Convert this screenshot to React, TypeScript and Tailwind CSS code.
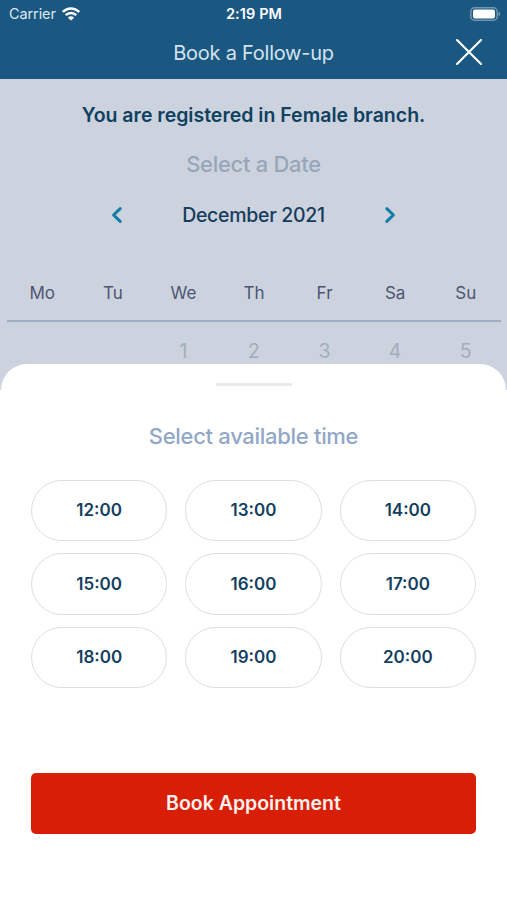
import React, { useState } from 'react';

const WEEK_DAYS = ['Mo', 'Tu', 'We', 'Th', 'Fr', 'Sa', 'Su'];
const FIRST_WEEK = ['', '', '1', '2', '3', '4', '5'];
const TIMES = ['12:00', '13:00', '14:00', '15:00', '16:00', '17:00', '18:00', '19:00', '20:00'];

const WifiIcon = () => (
  <svg width="18" height="14" viewBox="0 0 18 14" fill="none" stroke="#fff" strokeWidth="2.5">
    <path d="M0.8 5C5.4 0.3 12.6 0.3 17.2 5" />
    <path d="M3.7 8.2C6.6 5.2 11.4 5.2 14.3 8.2" />
    <path d="M9 13.6L5.9 10.7C7.7 8.9 10.3 8.9 12.1 10.7Z" fill="#fff" stroke="none" />
  </svg>
);

const BatteryIcon = () => (
  <svg width="31" height="14" viewBox="0 0 31 14" fill="none">
    <rect x="0.8" y="0.8" width="26.4" height="12.4" rx="3.8" stroke="#fff" strokeOpacity="0.38" strokeWidth="1.5" />
    <rect x="3" y="2.6" width="22" height="8.8" rx="1.8" fill="#fff" />
    <path d="M28.6 4.8C30.6 5.4 30.6 8.6 28.6 9.2Z" fill="#fff" fillOpacity="0.45" />
  </svg>
);

const StatusBar = () => (
  <div className="grid h-[27px] grid-cols-3 items-center pl-[9px] pr-[6px] text-white">
    <div className="flex items-center gap-[6px] text-[14.5px] tracking-[-0.1px] text-[#dce8f2]">
      <span>Carrier</span>
      <WifiIcon />
    </div>
    <div className="-ml-[2px] text-center text-[14.5px] font-semibold tracking-[0.1px]">2:19 PM</div>
    <div className="flex justify-end">
      <BatteryIcon />
    </div>
  </div>
);

const Header = () => (
  <header className="h-[79px] bg-[#1a5882]">
    <StatusBar />
    <div className="grid h-[50px] grid-cols-[60px_1fr_60px] items-center">
      <h1 className="col-start-2 pt-px text-center text-[20px] tracking-[-0.25px] text-[#d5e2ed]">Book a Follow-up</h1>
      <button aria-label="Close" className="ml-[8px] w-[28px]">
        <svg width="28" height="28" viewBox="0 0 28 28" stroke="#fff" strokeWidth="2.1" strokeLinecap="round">
          <path d="M2 2L26 26M26 2L2 26" />
        </svg>
      </button>
    </div>
  </header>
);

const Chevron = ({ flip = false }: { flip?: boolean }) => (
  <svg
    width="12"
    height="18"
    viewBox="0 0 12 18"
    fill="none"
    stroke="#0f7da5"
    strokeWidth="3"
    strokeLinecap="round"
    strokeLinejoin="round"
    className={flip ? 'rotate-180' : ''}
  >
    <path d="M9.2 2.6L2.6 9L9.2 15.4" />
  </svg>
);

const Calendar = () => (
  <section className="h-[285px] text-center">
    <p className="pt-[22px] text-[19.5px] leading-[28px] font-semibold text-[#0f4160]">
      You are registered in Female branch.
    </p>
    <h2 className="mt-[20px] text-[22px] leading-[30px] font-medium tracking-[-0.3px] text-[#97a6b8]">
      Select a Date
    </h2>
    <div className="mt-[21px] flex h-[30px] items-center justify-between px-[111px]">
      <button aria-label="Previous month">
        <Chevron />
      </button>
      <span className="pt-px text-[19.5px] font-medium tracking-[-0.3px] text-[#173c5b]">December 2021</span>
      <button aria-label="Next month">
        <Chevron flip />
      </button>
    </div>
    <div className="mr-[6px] ml-[7px] mt-[50px] grid h-[42px] grid-cols-7 border-b-2 border-[#9faec3] text-[17px] leading-[26px] text-[#4d5671]">
      {WEEK_DAYS.map((day) => (
        <span key={day}>{day}</span>
      ))}
    </div>
    <div className="mr-[6px] ml-[7px] mt-[15px] grid grid-cols-7 text-[19.5px] leading-[28px] text-[#a4adba]">
      {FIRST_WEEK.map((date, idx) => (
        <span key={idx}>{date}</span>
      ))}
    </div>
  </section>
);

const TimeSheet = () => {
  const [selected, setSelected] = useState<string | null>(null);

  return (
    <section className="mx-px flex flex-1 flex-col rounded-t-[26px] bg-white px-[30px]">
      {/* Drag handle */}
      <div className="mx-auto mt-[19px] h-[3px] w-[76px] bg-[#ebebeb]" />
      <h2 className="mt-[35px] h-[30px] text-center text-[22px] leading-[30px] font-medium tracking-[-0.3px] text-[#92a7c8]">
        Select available time
      </h2>
      <div className="mt-[29px] grid grid-cols-3 gap-x-[18px] gap-y-3">
        {TIMES.map((time) => (
          <button
            key={time}
            onClick={() => setSelected(time)}
            className={`h-[61.3px] rounded-full border-[1.5px] pt-px text-[17px] font-semibold text-[#153f60] ${
              selected === time ? 'border-[#1a5882]' : 'border-[#dedede]'
            }`}
          >
            {time}
          </button>
        ))}
      </div>
      <button className="mt-[85px] h-[61px] rounded-[5px] bg-[#d81f05] pt-px text-[19.5px] font-semibold text-[#fff1ef]">
        Book Appointment
      </button>
    </section>
  );
};

export default function App() {
  return (
    <main className="flex h-[900px] w-[507px] flex-col overflow-hidden bg-[linear-gradient(#ccd3df_0_390px,#fff_390px)] font-[Inter,'Liberation_Sans',sans-serif]">
      <Header />
      <Calendar />
      <TimeSheet />
    </main>
  );
}
